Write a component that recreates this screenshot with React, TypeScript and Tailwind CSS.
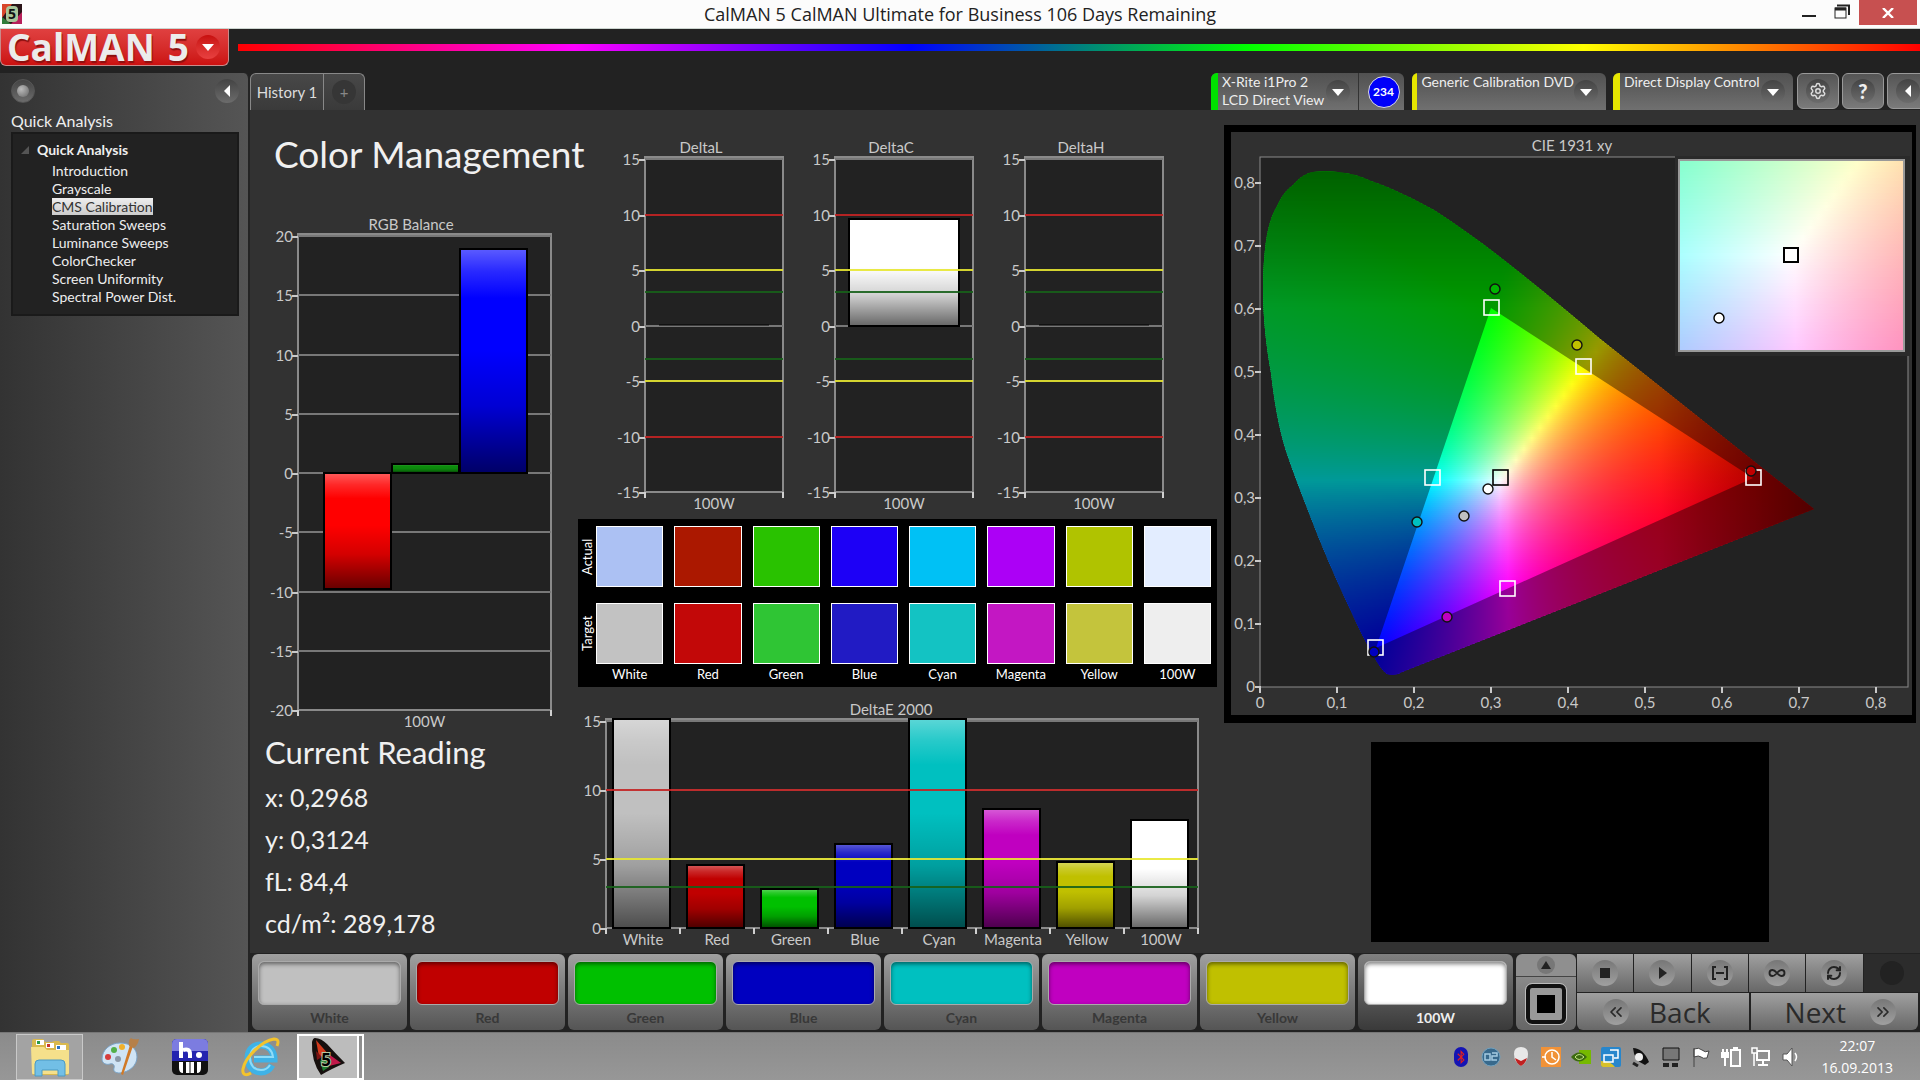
import { useState, type ReactNode } from 'react';
import { FaBluetoothB } from 'react-icons/fa';
import {
  ChevronsLeft,
  ChevronsRight,
  Infinity as InfinityIcon,
  RefreshCw,
  Settings,
} from 'lucide-react';

interface Bar {
  from: number;
  to: number;
  x: number;
  width: number;
  color: string;
}

interface Limit {
  value: number;
  color: string;
}

interface ChartProps {
  title: string;
  titleX: number;
  titleY: number;
  width: number;
  height: number;
  plot: { x: number; y: number; w: number; h: number };
  min: number;
  max: number;
  categories: string[];
  bars: Bar[];
  limits?: Limit[];
  grid?: number[];
}

const pages = [
  'Introduction',
  'Grayscale',
  'CMS Calibration',
  'Saturation Sweeps',
  'Luminance Sweeps',
  'ColorChecker',
  'Screen Uniformity',
  'Spectral Power Dist.',
];

const patches = [
  { name: 'White', level: '#c0c0c0', actual: '#acc1f3', target: '#c2c2c2', deltaE: 16 },
  { name: 'Red', level: '#c00000', actual: '#ab1800', target: '#c20808', deltaE: 4.6 },
  { name: 'Green', level: '#00c000', actual: '#29c200', target: '#2fc534', deltaE: 2.8 },
  { name: 'Blue', level: '#0000c0', actual: '#1d00f6', target: '#211bc4', deltaE: 6.1 },
  { name: 'Cyan', level: '#00c0c0', actual: '#00c1f5', target: '#13c3c3', deltaE: 16 },
  { name: 'Magenta', level: '#c000c0', actual: '#ac00f6', target: '#c317c3', deltaE: 8.6 },
  { name: 'Yellow', level: '#c0c000', actual: '#b0c300', target: '#c4c43c', deltaE: 4.8 },
  { name: '100W', level: '#ffffff', actual: '#e3edff', target: '#eeeeee', deltaE: 7.8 },
];

const RED = '#c42424';
const YELLOW = '#e8e832';
const GREEN = '#17611a';

function Chart({
  title,
  titleX,
  titleY,
  width,
  height,
  plot,
  min,
  max,
  categories,
  bars,
  limits = [],
  grid = [],
}: ChartProps) {
  const top = plot.y - 2;
  const bottom = plot.y + plot.h;
  const right = plot.x + plot.w;
  const toY = (v: number) => Math.max(top, Math.round(bottom - ((v - min) / (max - min)) * plot.h));
  const ticks: number[] = [];
  for (let v = min; v <= max; v += 5) ticks.push(v);
  const step = plot.w / categories.length;
  const id = title.replace(/\s/g, '');

  return (
    <svg viewBox={`0 0 ${width} ${height}`} className="block w-full" fontSize="15" fill="#c9c9c9">
      <defs>
        <linearGradient id={`${id}-shade`} x1="0" y1="0" x2="0" y2="1">
          <stop offset="0" stopColor="#fff" stopOpacity="0.36" />
          <stop offset="0.1" stopColor="#fff" stopOpacity="0.16" />
          <stop offset="0.22" stopColor="#fff" stopOpacity="0" />
          <stop offset="0.45" stopColor="#000" stopOpacity="0" />
          <stop offset="0.7" stopColor="#000" stopOpacity="0.17" />
          <stop offset="1" stopColor="#000" stopOpacity="0.6" />
        </linearGradient>
      </defs>
      <text x={titleX} y={titleY} textAnchor="middle">
        {title}
      </text>
      <rect x={plot.x} y={top} width={plot.w} height={plot.h + 2} fill="#222" stroke="#8a8a8a" strokeWidth="2" />
      {ticks.map((v) => (
        <g key={v}>
          <text x={plot.x - 5} y={toY(v) + 6} textAnchor="end">
            {v}
          </text>
          <path d={`M${plot.x - 6} ${toY(v) + 1}h6`} stroke="#c9c9c9" strokeWidth="2" />
        </g>
      ))}
      {grid.map((v) => (
        <path key={v} d={`M${plot.x} ${toY(v)}h${plot.w}`} stroke="#787878" strokeWidth="2" />
      ))}
      {bars.map((bar) => {
        const y = toY(Math.max(bar.from, bar.to));
        const h = toY(Math.min(bar.from, bar.to)) - y;
        if (h === 0) {
          return <path key={bar.x} d={`M${bar.x} ${y - 1}h${bar.width}`} stroke="#000" />;
        }
        return (
          <g key={bar.x} stroke="#000" strokeWidth="2">
            <rect x={bar.x} y={y} width={bar.width} height={h} fill={bar.color} />
            <rect x={bar.x} y={y} width={bar.width} height={h} fill={`url(#${id}-shade)`} />
          </g>
        );
      })}
      {limits.map((l) => (
        <path key={l.value} d={`M${plot.x} ${toY(l.value)}h${plot.w}`} stroke={l.color} strokeWidth="2" opacity="0.9" />
      ))}
      {categories.map((c, i) => (
        <g key={c}>
          <path d={`M${plot.x + i * step} ${bottom}v6`} stroke="#d0d0d0" strokeWidth="2" />
          <text x={plot.x + (i + 0.5) * step} y={bottom + 17} textAnchor="middle">
            {c}
          </text>
        </g>
      ))}
      <path d={`M${right} ${bottom}v6`} stroke="#d0d0d0" strokeWidth="2" />
    </svg>
  );
}

// Linear sRGB of a chromaticity at unit luminance, scaled so the largest channel is full.
function chromaColor(x: number, y: number, gain: number) {
  const X = x / y;
  const Z = (1 - x - y) / y;
  const rgb = [
    3.2406 * X - 1.5372 - 0.4986 * Z,
    -0.9689 * X + 1.8758 + 0.0415 * Z,
    0.0557 * X - 0.204 + 1.057 * Z,
  ].map((c) => Math.max(0, c));
  const peak = Math.max(...rgb);
  return `rgb(${rgb.map((c) => Math.round((c / peak) * 255 * gain)).join(',')})`;
}

interface ChromaFieldProps {
  id: string;
  left: number;
  top: number;
  width: number;
  height: number;
  row: number;
  toXY: (px: number, py: number) => [number, number];
  gain?: (px: number, py: number) => number;
}

function ChromaField({ id, left, top, width, height, row, toXY, gain = () => 1 }: ChromaFieldProps) {
  const rows = Math.ceil(height / row);
  const stops = Math.ceil(width / 8);
  return (
    <g>
      {Array.from({ length: rows }, (_, r) => {
        const py = r * row + row / 2;
        return (
          <g key={r}>
            <linearGradient id={`${id}${r}`}>
              {Array.from({ length: stops + 1 }, (_, s) => {
                const px = (s / stops) * width;
                const [x, y] = toXY(px, py);
                return <stop key={s} offset={s / stops} stopColor={chromaColor(x, Math.max(y, 0.005), gain(px, py))} />;
              })}
            </linearGradient>
            <rect
              x={left}
              y={top + r * row}
              width={width}
              height={Math.min(row + 1, height - r * row)}
              fill={`url(#${id}${r})`}
            />
          </g>
        );
      })}
    </g>
  );
}

const locus =
  'M127 517C119 511 114 499 107 487C101 476 95 463 89 450C75 420 61 388 49 356C41 335 33 315 26 294' +
  'C18 268 14 242 11 216C6 188 3 160 3 131C3 115 4 99 6 84C8 71 11 59 17 49C21 40 26 33 33 28' +
  'C39 21 46 16 53 15C61 14 70 14 78 15C90 16 101 19 111 24C134 32 154 42 174 53' +
  'C202 71 229 91 254 111C283 134 311 157 339 181L554 352L142 515C137 518 132 519 127 517Z';

const targets = [
  { x: 231, y: 151, color: '#fff' },
  { x: 323, y: 210, color: '#fff' },
  { x: 493, y: 321, color: '#fff' },
  { x: 247, y: 432, color: '#fff' },
  { x: 115, y: 491, color: '#fff' },
  { x: 172, y: 321, color: '#fff' },
  { x: 240, y: 321, color: '#000' },
];

const readings = [
  { x: 235, y: 132, color: '#00b400' },
  { x: 317, y: 188, color: '#c0c000' },
  { x: 491, y: 314, color: '#c00000' },
  { x: 187, y: 460, color: '#c000c0' },
  { x: 114, y: 495, color: '#0000c0' },
  { x: 157, y: 365, color: '#00c0c0' },
  { x: 204, y: 359, color: '#c0c0c0' },
  { x: 228, y: 332, color: '#fff' },
];

function CieChart() {
  const steps = [0, 1, 2, 3, 4, 5, 6, 7, 8];
  const label = (n: number) => (n === 0 ? '0' : `0,${n}`);
  return (
    <svg viewBox="0 0 681 583" className="block w-full bg-[#303030]" fontSize="15" fill="#c9c9c9">
      <defs>
        <clipPath id="locus">
          <path d={locus} />
        </clipPath>
      </defs>
      <text x="341" y="19" textAnchor="middle">
        CIE 1931 xy
      </text>
      <rect x="29" y="25" width="648" height="530" fill="#222" stroke="#8a8a8a" />
      {steps.map((n) => (
        <g key={n}>
          <text x="24" y={560 - n * 63} textAnchor="end">
            {label(n)}
          </text>
          <text x={29 + n * 77} y="576" textAnchor="middle">
            {label(n)}
          </text>
          <path d={`M24 ${555 - n * 63}h6M${29 + n * 77} 555v6`} stroke="#c9c9c9" strokeWidth="2" />
        </g>
      ))}
      <g transform="translate(29 25)">
        <g clipPath="url(#locus)">
          <ChromaField
            id="cie"
            left={0}
            top={0}
            width={560}
            height={524}
            row={2}
            toXY={(px, py) => [px / 771, (530 - py) / 629]}
            gain={(px, py) => 1 - Math.max(0, px - 400) * 0.003 - Math.max(0, 150 - py) * 0.0027}
          />
          <path d="M0 0H560V530H0ZM231 151L116 491L493 321Z" fill="#000" fillOpacity="0.4" fillRule="evenodd" />
        </g>
        {targets.map((t) => (
          <rect key={`${t.x}-${t.y}`} x={t.x - 7} y={t.y - 8} width="15" height="15" fill="none" stroke={t.color} strokeWidth="1.6" />
        ))}
        {readings.map((r) => (
          <circle key={`${r.x}-${r.y}`} cx={r.x} cy={r.y} r="5" fill={r.color} stroke="#111" strokeWidth="1.4" />
        ))}
      </g>
      <rect x="444" y="24" width="235" height="200" fill="#2a2a2a" />
      <ChromaField
        id="zoom"
        left={448}
        top={28}
        width={225}
        height={191}
        row={3}
        toXY={(px, py) => [0.3127 + (px - 112) / 4526, 0.329 - (py - 95) / 3800]}
      />
      <rect x="448" y="28" width="225" height="191" fill="none" stroke="#999" strokeWidth="2" />
      <rect x="553" y="116" width="14" height="14" fill="#fff" stroke="#000" strokeWidth="2" />
      <circle cx="488" cy="186" r="5" fill="#fff" stroke="#000" strokeWidth="1.4" />
    </svg>
  );
}

function Knob({ children, className = '' }: { children?: ReactNode; className?: string }) {
  return (
    <span
      className={`flex size-6 shrink-0 items-center justify-center rounded-full bg-linear-to-b from-[#444] to-[#6c6c6c] ${className}`}
    >
      {children}
    </span>
  );
}

function Triangle({ dir, className = 'fill-white' }: { dir: 'down' | 'left' | 'up' | 'right'; className?: string }) {
  const paths = {
    down: 'M0 3H12L6 10Z',
    left: 'M3 6L9 0V12Z',
    up: 'M1 10H11L6 2Z',
    right: 'M3 0L11 6L3 12Z',
  };
  return (
    <svg viewBox="0 0 12 12" className={`size-3 ${className}`}>
      <path d={paths[dir]} />
    </svg>
  );
}

function TitleBar() {
  return (
    <header className="grid h-[29px] grid-cols-[1fr_auto_1fr] border-b border-[#ccd5d0] bg-[#fcfcfc] font-['Open_Sans',sans-serif]">
      <svg viewBox="0 0 20 20" className="mt-1 ml-0.5 size-5">
        <rect width="20" height="20" fill="#2a1418" />
        <path d="M0 0H10L0 14Z" fill="#d8452a" />
        <path d="M20 0V20H9L20 8Z" fill="#b8205a" />
        <path d="M0 20V13L9 20Z" fill="#2f7d3a" />
        <rect x="4" y="2" width="12" height="16" rx="4" fill="#a9c59a" />
        <text x="10" y="15" textAnchor="middle" fontSize="14" fontWeight="700" fill="#111">
          5
        </text>
      </svg>
      <h1 className="self-center text-lg leading-6 text-[#222]">CalMAN 5 CalMAN Ultimate for Business 106 Days Remaining</h1>
      <div className="mr-[3px] flex justify-end">
        <button aria-label="Minimize" className="flex h-5 w-8 items-end justify-center pb-[3px]">
          <span className="h-0.5 w-3.5 bg-[#222]" />
        </button>
        <button aria-label="Restore" className="flex h-[22px] w-[34px] items-center justify-center">
          <svg viewBox="0 0 16 15" className="h-[15px] w-4" fill="none" stroke="#222">
            <path d="M3 1.5H15V11" strokeWidth="2" />
            <rect x="1" y="4" width="11" height="10" />
            <path d="M1 5H12" strokeWidth="3" />
          </svg>
        </button>
        <button aria-label="Close" className="flex h-[25px] w-[58px] items-center justify-center bg-[#c75050]">
          <svg viewBox="0 0 12 10" className="h-2.5 w-3" stroke="#fff" strokeWidth="2.4">
            <path d="M1 0L11 10M11 0L1 10" />
          </svg>
        </button>
      </div>
    </header>
  );
}

function Banner() {
  return (
    <div className="flex h-11 items-start gap-[9px]">
      <button className="flex h-[37px] w-[229px] items-center justify-between rounded-b-md border border-t-0 border-[#c98a8a] bg-linear-to-b from-[#e04040] to-[#cc1010] pr-2 pl-1.5">
        <span className="flex w-[182px] justify-between font-['Open_Sans',sans-serif] text-[37px] leading-9 font-bold text-[#ececec] text-shadow-[1px_2px_1px_#8c1010]">
          <span>CalMAN</span>
          <span>5</span>
        </span>
        <span className="flex size-6 items-center justify-center rounded-full bg-linear-to-b from-[#c80d0d] to-[#e84040]">
          <Triangle dir="down" />
        </span>
      </button>
      <div className="mt-[15px] h-[7px] flex-1 bg-[linear-gradient(to_right,#f00,#f0f,#00f,#0f0,#ff0,#f00)]" />
    </div>
  );
}

function Sidebar() {
  const [page, setPage] = useState('CMS Calibration');
  return (
    <aside className="flex w-[250px] shrink-0 flex-col rounded-tr-md border-r-2 border-[#242424] bg-linear-to-r from-[#333] to-[#555] pr-[9px] pl-[11px]">
      <div className="flex h-9 items-center justify-between">
        <button aria-label="Record">
          <Knob className="border border-[#555]">
            <span className="size-3 rounded-full bg-radial-[at_35%_35%] from-[#bbb] to-[#666]" />
          </Knob>
        </button>
        <button aria-label="Collapse sidebar">
          <Knob>
            <Triangle dir="left" />
          </Knob>
        </button>
      </div>
      <h2 className="mt-0.5 mb-px text-[16px] leading-5 text-[#eee]">Quick Analysis</h2>
      <nav className="border-2 border-[#1a1a1a] bg-[#222] px-2 pt-1.5 pb-2 text-[14px] text-[#eee]">
        <div className="flex h-[19px] items-center gap-2 font-bold">
          <svg viewBox="0 0 8 8" className="size-2">
            <path d="M8 0V8H0Z" fill="#555" />
          </svg>
          Quick Analysis
        </div>
        <ul className="ml-[31px] pt-[3px]">
          {pages.map((p) => (
            <li key={p} className="flex items-center pb-px leading-[17px]">
              <a
                href="#"
                onClick={() => setPage(p)}
                className={p === page ? 'bg-linear-to-b from-[#eee] to-[#ccc] text-[#333]' : ''}
              >
                {p}
              </a>
            </li>
          ))}
        </ul>
      </nav>
    </aside>
  );
}

interface DeviceProps {
  strip: string;
  lines: string[];
  width: string;
  badge?: string;
}

function Device({ strip, lines, width, badge }: DeviceProps) {
  return (
    <div className={`flex h-[37px] ${width} overflow-hidden rounded-t-md bg-linear-to-b from-[#515151] to-[#707070]`}>
      <span className={`w-[7px] ${strip}`} />
      <button className="flex flex-1 items-start justify-between pr-2 pl-1 text-left text-[14px] leading-[18px] text-[#eee]">
        <span className="whitespace-nowrap">
          {lines.map((l) => (
            <span key={l} className="block">
              {l}
            </span>
          ))}
        </span>
        <Knob className="mt-[7px]">
          <Triangle dir="down" />
        </Knob>
      </button>
      {badge && (
        <div className="flex w-[46px] items-center justify-center border-l border-[#333] pl-1">
          <span className="flex size-8 items-center justify-center rounded-full border border-[#ddd] bg-[#0000fa] text-xs font-bold text-white">
            {badge}
          </span>
        </div>
      )}
    </div>
  );
}

function ToolButton({ label, children }: { label: string; children: ReactNode }) {
  return (
    <button
      aria-label={label}
      className="flex h-9 w-[42px] shrink-0 items-center justify-center rounded-md border border-[#999] bg-linear-to-b from-[#555] to-[#7a7a7a]"
    >
      <Knob>{children}</Knob>
    </button>
  );
}

function TabRow() {
  return (
    <div className="flex h-[37px] justify-between bg-[#222]">
      <div className="flex rounded-t-md border border-b-0 border-[#888] bg-linear-to-b from-[#484848] to-[#3a3a3a]">
        <button className="w-[73px] border-r border-[#888] text-[15px] text-[#ddd]">History 1</button>
        <button aria-label="Add history" className="flex w-10 items-center justify-center">
          <span className="flex size-6 items-center justify-center rounded-full bg-[#363636] text-[15px] text-[#888]">+</span>
        </button>
      </div>
      <div className="flex overflow-hidden">
        <Device strip="bg-[#00e000]" lines={['X-Rite i1Pro 2', 'LCD Direct View']} width="w-[193px]" badge="234" />
        <div className="w-2" />
        <Device strip="bg-[#e6e600]" lines={['Generic Calibration DVD']} width="w-[194px]" />
        <div className="w-[7px]" />
        <Device strip="bg-[#e6e600]" lines={['Direct Display Control']} width="w-[180px]" />
        <div className="-mr-[9px] ml-1 flex gap-[3px]">
          <ToolButton label="Settings">
            <Settings className="size-[18px] text-[#ddd]" />
          </ToolButton>
          <ToolButton label="Help">
            <span className="text-xl font-black text-[#eee]">?</span>
          </ToolButton>
          <ToolButton label="Expand">
            <Triangle dir="left" />
          </ToolButton>
        </div>
      </div>
    </div>
  );
}

const deltaLimits: Limit[] = [
  { value: 10, color: RED },
  { value: 5, color: YELLOW },
  { value: 3, color: GREEN },
  { value: -3, color: GREEN },
  { value: -5, color: YELLOW },
  { value: -10, color: RED },
];

const deltas = [
  { title: 'DeltaL', value: 0 },
  { title: 'DeltaC', value: 9.6 },
  { title: 'DeltaH', value: 0 },
];

function SwatchPanel() {
  return (
    <div className="flex h-[168px] bg-black pr-1.5 text-[13px] text-white">
      <div className="flex w-[18px] flex-col items-center gap-4 pt-[7px]">
        {['Actual', 'Target'].map((l) => (
          <span key={l} className="h-[61px] rotate-180 text-center leading-[18px] [writing-mode:vertical-rl]">
            {l}
          </span>
        ))}
      </div>
      <div className="grid flex-1 grid-cols-8 gap-[11px] pt-[7px]">
        {patches.map((p) => (
          <div key={p.name} className="text-center">
            <div className="h-[61px] border border-white" style={{ backgroundColor: p.actual }} />
            <div className="mt-4 h-[61px] border border-white" style={{ backgroundColor: p.target }} />
            <div className="leading-5">{p.name}</div>
          </div>
        ))}
      </div>
    </div>
  );
}

function Workspace() {
  return (
    <main className="grid flex-1 grid-cols-[328fr_639fr_703fr] content-start bg-[#323232]">
      <section className="min-w-0">
        <h2 className="mt-[19px] ml-6 text-[37px] leading-[50px] whitespace-nowrap text-[#f0f0f0]">Color Management</h2>
        <div className="mt-9">
          <Chart
            title="RGB Balance"
            titleX={161}
            titleY={15}
            width={328}
            height={515}
            plot={{ x: 48, y: 21, w: 253, h: 474 }}
            min={-20}
            max={20}
            grid={[-15, -10, -5, 0, 5, 10, 15, 20]}
            categories={['100W']}
            bars={[
              { from: 0, to: -9.8, x: 74, width: 67, color: '#ff0000' },
              { from: 0, to: 0.8, x: 142, width: 67, color: '#0c8c0c' },
              { from: 0, to: 18.9, x: 210, width: 67, color: '#0000ff' },
            ]}
          />
        </div>
        <div className="pl-[15px] text-[#f0f0f0]">
          <h3 className="mt-1 text-[31px] leading-9">Current Reading</h3>
          <ul className="pt-1.5 text-[25px] leading-[42px]">
            <li>x: 0,2968</li>
            <li>y: 0,3124</li>
            <li>fL: 84,4</li>
            <li>cd/m²: 289,178</li>
          </ul>
        </div>
      </section>

      <section className="min-w-0">
        <div className="flex pt-[25px] pr-[41px] pl-7">
          {deltas.map((d) => (
            <div key={d.title} className="flex-1">
              <Chart
                title={d.title}
                titleX={95}
                titleY={18}
                width={190}
                height={384}
                plot={{ x: 39, y: 24, w: 138, h: 333 }}
                min={-15}
                max={15}
                grid={[0, 15]}
                categories={['100W']}
                bars={[{ from: 0, to: d.value, x: 53, width: 110, color: '#ffffff' }]}
                limits={deltaLimits}
              />
            </div>
          ))}
        </div>
        <SwatchPanel />
        <div className="mt-2">
          <Chart
            title="DeltaE 2000"
            titleX={313}
            titleY={20}
            width={639}
            height={258}
            plot={{ x: 28, y: 26, w: 592, h: 207 }}
            min={0}
            max={15}
            grid={[5, 10, 15]}
            categories={patches.map((p) => p.name)}
            bars={patches.map((p, i) => ({ from: 0, to: p.deltaE, x: 35 + i * 74, width: 57, color: p.level }))}
            limits={[
              { value: 10, color: RED },
              { value: 5, color: YELLOW },
              { value: 3, color: GREEN },
            ]}
          />
        </div>
      </section>

      <section className="min-w-0 pt-[15px] pr-1 pl-[7px]">
        <div className="border-8 border-r-4 border-l-[7px] border-t-[7px] border-black">
          <CieChart />
        </div>
        <div className="mx-auto mt-[19px] h-[200px] w-[398px] bg-black" />
      </section>
    </main>
  );
}

const transport = [
  { label: 'Stop', icon: <span className="size-2.5 bg-[#222]" /> },
  { label: 'Play', icon: <Triangle dir="right" className="fill-[#222]" /> },
  {
    label: 'Read series',
    icon: (
      <svg viewBox="0 0 16 14" className="h-3.5 w-4" fill="none" stroke="#222" strokeWidth="2">
        <path d="M4 1H1V13H4M12 1H15V13H12M4 7H12" />
      </svg>
    ),
  },
  { label: 'Continuous', icon: <InfinityIcon className="size-[18px] text-[#222]" strokeWidth={2.5} /> },
  { label: 'Refresh', icon: <RefreshCw className="size-4 text-[#222]" strokeWidth={3} /> },
];

const key = 'bg-linear-to-b from-[#a0a0a0] to-[#686868]';

function ControlBar() {
  const [selected, setSelected] = useState('100W');
  return (
    <div className="flex h-[79px] items-stretch bg-[#222] pt-px pb-0.5 pl-0.5">
      <div className="flex flex-1 gap-[3px] pr-[3px]">
        {patches.map((p) => (
          <button
            key={p.name}
            onClick={() => setSelected(p.name)}
            className={`flex flex-1 flex-col rounded-md px-1.5 pt-[7px] text-[14px] font-bold ${
              p.name === selected
                ? 'bg-linear-to-b from-[#808080] to-[#3a3a3a] text-[#eee]'
                : 'bg-linear-to-b from-[#a0a0a0] to-[#555] text-[#383838]'
            }`}
          >
            <span
              className="h-[46px] w-full rounded-md border border-[#aaa] inset-shadow-sm inset-shadow-black/50"
              style={{ backgroundColor: p.level }}
            />
            <span className="w-full text-center leading-[25px]">{p.name}</span>
          </button>
        ))}
      </div>
      <div className="flex w-[60px] flex-col">
        <button aria-label="Show patterns" className="flex h-[23px] items-center justify-center rounded-t-md border-b border-[#444] bg-[#8f8f8f]">
          <span className="flex size-[18px] items-center justify-center rounded-full bg-[#777]">
            <Triangle dir="up" className="fill-[#222]" />
          </span>
        </button>
        <button aria-label="Pattern window" className="flex flex-1 items-center justify-center rounded-b-md bg-linear-to-b from-[#8a8a8a] to-[#666]">
          <span className="flex size-10 items-center justify-center rounded-md border-4 border-[#111] bg-[#999] outline outline-[#bbb]">
            <span className="size-[18px] bg-black" />
          </span>
        </button>
      </div>
      <div className="ml-px flex w-[343px] flex-col gap-px">
        <div className="flex h-[38px] gap-px">
          {transport.map((t) => (
            <button key={t.label} aria-label={t.label} className={`flex flex-1 items-center justify-center ${key}`}>
              <span className="flex size-[26px] items-center justify-center rounded-full bg-linear-to-b from-[#777] to-[#a0a0a0]">
                {t.icon}
              </span>
            </button>
          ))}
          <div className="flex flex-1 items-center justify-center bg-[#2c2c2c]">
            <span className="size-6 rounded-full bg-[#222]" />
          </div>
        </div>
        <div className="flex flex-1 gap-0.5 pr-0.5 font-['Open_Sans',sans-serif] text-[28px] leading-8 font-medium text-[#2a2a2a]">
          <button className={`flex flex-1 items-center rounded-bl-md pl-[26px] ${key}`}>
            <span className="mr-5 flex size-[26px] items-center justify-center rounded-full bg-linear-to-b from-[#777] to-[#a0a0a0]">
              <ChevronsLeft className="size-5" />
            </span>
            Back
          </button>
          <button className={`flex flex-1 items-center justify-end rounded-br-md pr-[22px] ${key}`}>
            Next
            <span className="ml-6 flex size-[26px] items-center justify-center rounded-full bg-linear-to-b from-[#777] to-[#a0a0a0]">
              <ChevronsRight className="size-5" />
            </span>
          </button>
        </div>
      </div>
    </div>
  );
}

function ExplorerIcon() {
  return (
    <svg viewBox="0 0 40 40" className="size-10">
      <path d="M2 4q0-2 2-2h9l2 3h7q1-1 3-1h4l2 2h6q2 0 2 2v28q0 2-2 2H4q-2 0-2-2z" fill="#d9b94e" />
      <path d="M6 3h8v5H6zM16 6h8v5h-8zM26 8h10v5H26z" fill="#fff" />
      <path d="M7 4h3v3H7z" fill="#2c9b48" />
      <path d="M17 7h3v3h-3z" fill="#c8392f" />
      <path d="M27 9h3v3h-3z" fill="#2b74c0" />
      <path d="M1 10h13l3 3h22v23q0 1-1 1H3q-1 0-1-1z" fill="#f5e08b" />
      <path d="M5 27q0-4 4-4h22q4 0 4 4v12h-7v-6H12v6H5z" fill="#72bfe6" stroke="#4a9ac4" />
    </svg>
  );
}

function PaintIcon() {
  return (
    <svg viewBox="0 0 40 40" className="size-10">
      <path
        d="M20 6c11 0 17 6 17 14s-7 15-17 16c-5 0-7-2-6-5s-1-5-4-4-8 0-8-5C2 13 10 6 20 6z"
        fill="#cfe4f5"
        stroke="#7aa3c7"
      />
      <circle cx="8" cy="20" r="3" fill="#d63c3c" />
      <circle cx="14" cy="13" r="3" fill="#54b04a" />
      <circle cx="22" cy="10" r="3" fill="#f0b02c" />
      <circle cx="18" cy="22" r="3" fill="#8a98a8" />
      <path d="M33 9L23 38l-2-1L30 8z" fill="#d07a28" />
      <path d="M29 9q-1-6 2-8 2 2 8 1-1 6-5 9z" fill="#b5804a" />
    </svg>
  );
}

function HcfrIcon() {
  return (
    <svg viewBox="0 0 38 38" className="size-[38px]">
      <rect x="1" y="1" width="36" height="36" rx="5" fill="#111" />
      <path d="M1 6q0-5 5-5h26q5 0 5 5v17H1z" fill="#2424b0" />
      <path d="M1 6q0-5 5-5h26q5 0 5 5v7H1z" fill="#7c7ce0" />
      <path d="M10 4v16M12 12q7-2 7 4v4" stroke="#fff" strokeWidth="4" fill="none" />
      <circle cx="28" cy="17" r="3" fill="#fff" />
      <path d="M8 24h4v11q-4 0-4-5zM15 24h8v11h-8zM26 24h4v6q0 5-4 5z" fill="#fff" />
      <path d="M19 24v11" stroke="#111" />
    </svg>
  );
}

function BrowserIcon() {
  return (
    <svg viewBox="0 0 40 40" className="size-10" fill="none">
      <path d="M32 28q-4 7-11 7c-8 0-13-6-13-14S13 8 21 8s13 6 13 14H14" stroke="#3fb2e6" strokeWidth="7" />
      <path d="M30 28q-3 5-9 5c-7 0-11-5-11-12s4-12 11-12 11 4 12 11H14" stroke="#8fdcf8" strokeWidth="2" />
      <path d="M11 36c-5 3-9 2-8-4C5 21 21 4 34 2q6 0 3 7" stroke="#f3c32c" strokeWidth="3" />
    </svg>
  );
}

function CalmanIcon() {
  return (
    <svg viewBox="0 0 40 40" className="size-10">
      <path d="M7 1q6 0 12 6 9 10 18 19-14 6-24 12Q3 24 4 5q1-4 3-4z" fill="#16100e" />
      <path d="M8 3l13 15-10 2z" fill="#d23a1c" />
      <path d="M22 18l11 8-12 3z" fill="#c2184a" />
      <path d="M12 24l8-4 1 10-6 4z" fill="#1f7d33" />
      <path d="M8 14l6 6-5 3z" fill="#7c1212" />
      <text x="18" y="29" textAnchor="middle" fontSize="17" fontWeight="700" stroke="#b6c9a0" strokeWidth="2" paintOrder="stroke" fill="#000">
        5
      </text>
    </svg>
  );
}

const apps = [
  { name: 'Paint', icon: <PaintIcon /> },
  { name: 'HCFR', icon: <HcfrIcon /> },
  { name: 'Internet Explorer', icon: <BrowserIcon /> },
];

const trayDrawings: { name: string; art: ReactNode }[] = [
  {
    name: 'Network agent',
    art: (
      <>
        <circle cx="10" cy="10" r="9" fill="#38698c" stroke="#6fa0bf" />
        <path d="M4 7h5v6H4zM11 6h5v3h-5v4h5" fill="none" stroke="#a5cbe2" strokeWidth="1.5" />
      </>
    ),
  },
  {
    name: 'Mouse',
    art: (
      <>
        <path d="M3 7q0-7 7-7t7 7q0 8-7 12Q3 15 3 7z" fill="#e8e8e8" />
        <path d="M4 11l6 3 6-3q-1 5-6 8-5-3-6-8z" fill="#c02020" />
      </>
    ),
  },
  {
    name: 'Backup',
    art: (
      <>
        <rect width="20" height="20" fill="#f09238" />
        <circle cx="11" cy="10" r="7" fill="none" stroke="#fff" strokeWidth="1.5" />
        <path d="M11 5v5l4 3M1 10h4" fill="none" stroke="#fff" strokeWidth="1.5" />
      </>
    ),
  },
  {
    name: 'Graphics',
    art: (
      <>
        <path d="M8 3h12v14H8z" fill="#76b900" />
        <path d="M0 10q8-9 16 0-8 9-16 0z" fill="#3d6b10" />
        <path d="M4 10q4-5 9 0-5 5-9 0z" fill="none" stroke="#c7e88a" />
      </>
    ),
  },
  {
    name: 'Display',
    art: (
      <>
        <rect width="20" height="20" rx="2" fill="#2786cc" />
        <path d="M0 14q10 0 14 6H2q-2 0-2-2z" fill="#d9c02a" />
        <path d="M3 8h9v7H3zM9 3h8v8h-4" fill="none" stroke="#fff" strokeWidth="1.5" />
      </>
    ),
  },
  {
    name: 'Speaker settings',
    art: (
      <>
        <path d="M2 1q10 0 16 14l-4 3Q3 14 2 1z" fill="#111" />
        <circle cx="8" cy="10" r="4" fill="#eee" />
        <path d="M2 16l5 3" stroke="#222" strokeWidth="3" />
      </>
    ),
  },
  {
    name: 'Docking',
    art: (
      <>
        <path d="M2 1h16v12H2z" fill="#777" stroke="#111" />
        <path d="M2 16h6v4H2zM11 16h6v4h-6z" fill="#222" />
      </>
    ),
  },
  {
    name: 'Action Center',
    art: <path d="M3 1v19M3 2q5-2 8 1t7 1l-2 7q-4 1-6-1t-7 0z" fill="#fff" stroke="#444" />,
  },
  {
    name: 'Battery',
    art: (
      <>
        <path d="M10 3h9v16h-9z" fill="#999" stroke="#fff" strokeWidth="2" />
        <path d="M12 1h5M2 2v4M6 2v4M1 6h6v4H1zM4 10v9" stroke="#fff" strokeWidth="2" fill="#fff" />
      </>
    ),
  },
  {
    name: 'Network',
    art: (
      <>
        <path d="M6 4h12v9H6zM12 13v4M7 18h10" fill="none" stroke="#fff" strokeWidth="2" />
        <path d="M1 1h5v5H1zM3 6v13" fill="#888" stroke="#fff" strokeWidth="1.5" />
      </>
    ),
  },
  {
    name: 'Volume',
    art: (
      <>
        <path d="M2 7h4l5-6v18l-5-6H2z" fill="#fff" stroke="#555" />
        <path d="M14 6q3 4 0 8" fill="none" stroke="#fff" strokeWidth="1.5" />
      </>
    ),
  },
];

function Taskbar() {
  return (
    <footer className="flex h-12 items-center justify-between border-t border-[#777] bg-linear-to-b from-[#8b8b8b] to-[#979797] pr-[27px] pl-4 font-['Open_Sans',sans-serif]">
      <div className="flex items-center">
        <button aria-label="File Explorer" className="flex h-[46px] w-[67px] items-center justify-center border border-[#c9c9c9] bg-[#a3a3a3]">
          <ExplorerIcon />
        </button>
        {apps.map((a) => (
          <button key={a.name} aria-label={a.name} className="ml-[3px] flex h-[46px] w-[67px] items-center justify-center">
            {a.icon}
          </button>
        ))}
        <button aria-label="CalMAN" className="ml-1 flex h-[46px] w-[62px] items-center justify-center border-2 border-white bg-[#bcbcbc]">
          <CalmanIcon />
        </button>
        <span className="h-[46px] w-[5px] border-2 border-l-0 border-white" />
      </div>
      <div className="flex items-center">
        <div className="flex gap-2.5">
          <button aria-label="Bluetooth" className="flex size-5 items-center justify-center">
            <span className="flex h-5 w-3.5 items-center justify-center rounded-full bg-[#1414b4]">
              <FaBluetoothB className="size-3.5 text-[#e02020]" />
            </span>
          </button>
          {trayDrawings.map((t) => (
            <button key={t.name} aria-label={t.name}>
              <svg viewBox="0 0 20 20" className="size-5">
                {t.art}
              </svg>
            </button>
          ))}
        </div>
        <div className="ml-[21px] text-center text-[14px] leading-[22px] text-white">
          <div>22:07</div>
          <div>16.09.2013</div>
        </div>
      </div>
    </footer>
  );
}

export default function App() {
  return (
    <div className="flex min-h-screen flex-col bg-[#222] font-[Lato,sans-serif]">
      <TitleBar />
      <Banner />
      <div className="flex flex-1">
        <Sidebar />
        <div className="flex min-w-0 flex-1 flex-col">
          <TabRow />
          <Workspace />
          <ControlBar />
        </div>
      </div>
      <Taskbar />
    </div>
  );
}
